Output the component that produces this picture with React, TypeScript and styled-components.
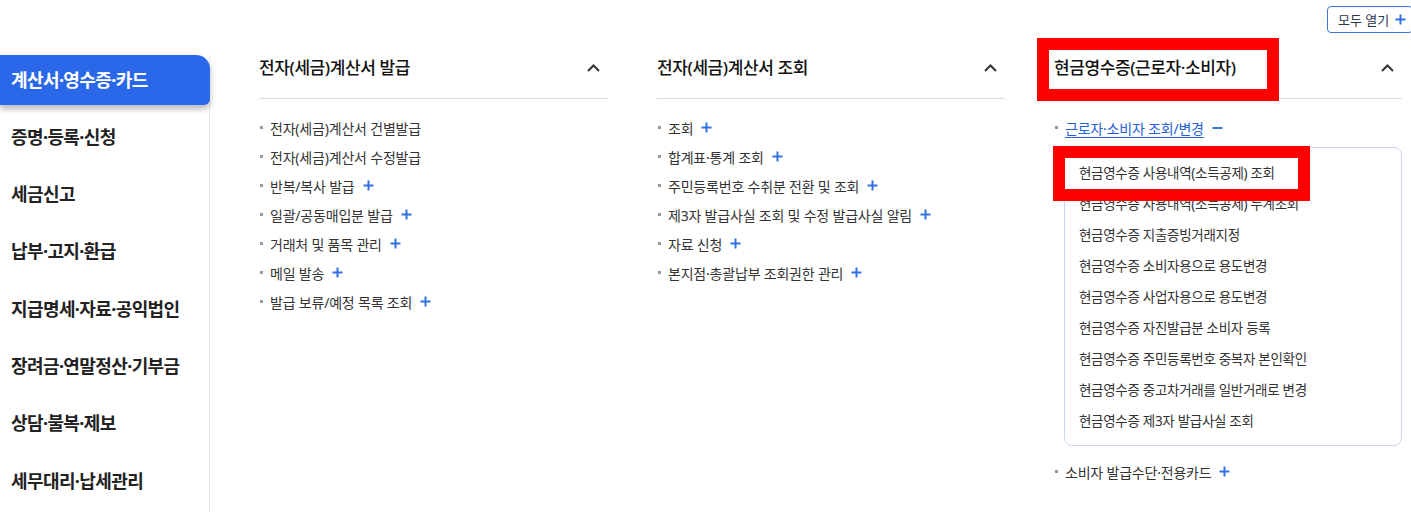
import * as React from 'react';
import styled, { createGlobalStyle } from 'styled-components';

const GlobalStyle = createGlobalStyle`
    body {
        margin: 0;
        background: #fff;
        font-family: 'Noto Sans', 'Noto Sans CJK KR', sans-serif;
        color: #222;
    }
`;

type Item = { label: string; more?: boolean };

const SIDE_MENU = [
    '계산서·영수증·카드',
    '증명·등록·신청',
    '세금신고',
    '납부·고지·환급',
    '지급명세·자료·공익법인',
    '장려금·연말정산·기부금',
    '상담·불복·제보',
    '세무대리·납세관리',
];

const ISSUE: Item[] = [
    { label: '전자(세금)계산서 건별발급' },
    { label: '전자(세금)계산서 수정발급' },
    { label: '반복/복사 발급', more: true },
    { label: '일괄/공동매입분 발급', more: true },
    { label: '거래처 및 품목 관리', more: true },
    { label: '메일 발송', more: true },
    { label: '발급 보류/예정 목록 조회', more: true },
];

const LOOKUP: Item[] = [
    { label: '조회', more: true },
    { label: '합계표·통계 조회', more: true },
    { label: '주민등록번호 수취분 전환 및 조회', more: true },
    { label: '제3자 발급사실 조회 및 수정 발급사실 알림', more: true },
    { label: '자료 신청', more: true },
    { label: '본지점·총괄납부 조회권한 관리', more: true },
];

const CASH_SUB = [
    '현금영수증 사용내역(소득공제) 조회',
    '현금영수증 사용내역(소득공제) 누계조회',
    '현금영수증 지출증빙거래지정',
    '현금영수증 소비자용으로 용도변경',
    '현금영수증 사업자용으로 용도변경',
    '현금영수증 자진발급분 소비자 등록',
    '현금영수증 주민등록번호 중복자 본인확인',
    '현금영수증 중고차거래를 일반거래로 변경',
    '현금영수증 제3자 발급사실 조회',
];

const PlusIcon = () => (
    <IconSvg width="11" height="11" viewBox="0 0 11 11">
        <path d="M5.5 0.5v10M0.5 5.5h10" stroke="#3570e0" strokeWidth="2" fill="none" />
    </IconSvg>
);

const MinusIcon = () => (
    <IconSvg width="11" height="11" viewBox="0 0 11 11">
        <path d="M0.5 6h10" stroke="#3570e0" strokeWidth="2" fill="none" />
    </IconSvg>
);

const ChevronUp = () => (
    <svg width="13" height="8" viewBox="0 0 13 8">
        <path d="M1 7l5.5-5.5L12 7" stroke="#333" strokeWidth="2" fill="none" />
    </svg>
);

const MenuColumn = ({ title, items }: { title: string; items: Item[] }) => (
    <Column>
        <ColumnHeader>
            <ColumnTitle>{title}</ColumnTitle>
            <ChevronUp />
        </ColumnHeader>
        <List>
            {items.map((item) => (
                <ListItem key={item.label}>
                    {item.label}
                    {item.more && <PlusIcon />}
                </ListItem>
            ))}
        </List>
    </Column>
);

const App = () => {
    return (
        <Page>
            <GlobalStyle />
            <TopBar>
                <OpenAllButton>
                    모두 열기 <PlusIcon />
                </OpenAllButton>
            </TopBar>
            <Main>
                <Sidebar>
                    {SIDE_MENU.map((label, i) => (
                        <SideItem key={label} $active={i === 0}>
                            {label}
                        </SideItem>
                    ))}
                </Sidebar>
                <Columns>
                    <MenuColumn title="전자(세금)계산서 발급" items={ISSUE} />
                    <MenuColumn title="전자(세금)계산서 조회" items={LOOKUP} />
                    <Column>
                        <ColumnHeader>
                            <ColumnTitle>현금영수증(근로자·소비자)</ColumnTitle>
                            <ChevronUp />
                        </ColumnHeader>
                        <List>
                            <ListItem>
                                <ActiveLink>근로자·소비자 조회/변경</ActiveLink>
                                <MinusIcon />
                            </ListItem>
                            <SubBox>
                                {CASH_SUB.map((label) => (
                                    <SubItem key={label}>{label}</SubItem>
                                ))}
                            </SubBox>
                            <ListItem>
                                소비자 발급수단·전용카드
                                <PlusIcon />
                            </ListItem>
                        </List>
                    </Column>
                </Columns>
            </Main>
            <Highlight style={{ left: 1037, top: 38, width: 242, height: 63 }} />
            <Highlight style={{ left: 1053, top: 146, width: 257, height: 55 }} />
        </Page>
    );
};

const Page = styled.div`
    position: relative;
    width: 1411px;
    height: 512px;
    overflow: hidden;
`;

const TopBar = styled.div`
    height: 55px;
    display: flex;
    justify-content: flex-end;
    align-items: flex-start;
    padding-top: 6px;
    box-sizing: border-box;
`;

const OpenAllButton = styled.button`
    display: flex;
    align-items: center;
    gap: 4px;
    height: 27px;
    width: 86px;
    margin-right: -2px;
    padding: 0 0 0 10px;
    border: 1px solid #3f72db;
    border-radius: 4px;
    background: #fff;
    font-family: inherit;
    font-size: 13px;
    color: #2c3550;
    box-sizing: border-box;
`;

const Main = styled.div`
    display: flex;
    height: 457px;
`;

const Sidebar = styled.nav`
    width: 210px;
    flex-shrink: 0;
    border-right: 1px solid #e4e4f4;
    box-sizing: border-box;
    display: flex;
    flex-direction: column;
    gap: 7.3px;
`;

const SideItem = styled.div<{ $active?: boolean }>`
    height: 50px;
    margin-right: -1px;
    display: flex;
    align-items: center;
    padding: 0 0 3px 11px;
    box-sizing: border-box;
    font-size: 18px;
    font-weight: 700;
    letter-spacing: -0.6px;
    color: ${({ $active }) => ($active ? '#fff' : '#222')};
    background: ${({ $active }) => ($active ? '#2a68e9' : 'transparent')};
    border-radius: 0 14px 6px 0;
    box-shadow: ${({ $active }) => ($active ? '0 4px 6px rgba(0, 0, 0, 0.28)' : 'none')};
    position: relative;
    z-index: 1;
`;

const Columns = styled.div`
    flex: 1;
    display: grid;
    grid-template-columns: 349px 348px 348px;
    column-gap: 49px;
    padding-left: 49px;
`;

const Column = styled.section`
    display: flex;
    flex-direction: column;
`;

const ColumnHeader = styled.div`
    height: 43px;
    border-bottom: 1px solid #dcdcdc;
    display: flex;
    justify-content: space-between;
    align-items: flex-start;
    padding-right: 8px;
    box-sizing: content-box;
    & > svg {
        margin-top: 9px;
    }
`;

const ColumnTitle = styled.h3`
    margin: 0;
    font-size: 17px;
    font-weight: 500;
    line-height: 26px;
    color: #111;
    letter-spacing: -0.4px;
`;

const List = styled.ul`
    list-style: none;
    margin: 0;
    padding: 14px 0 0;
`;

const ListItem = styled.li`
    position: relative;
    height: 29px;
    display: flex;
    align-items: center;
    gap: 6px;
    padding-left: 11px;
    font-size: 14px;
    color: #333;
    letter-spacing: -0.2px;
    &::before {
        content: '';
        position: absolute;
        left: 1px;
        top: 13px;
        width: 3px;
        height: 3px;
        background: #999;
    }
`;

const IconSvg = styled.svg`
    flex-shrink: 0;
    margin-left: 2px;
`;

const ActiveLink = styled.a`
    color: #2462d6;
    text-decoration: underline;
    text-underline-offset: 3px;
    cursor: pointer;
`;

const SubBox = styled.ul`
    list-style: none;
    margin: 5px 0 11px 10px;
    padding: 8px 0 10px 14px;
    border: 1px solid #c8d6ef;
    border-radius: 8px;
`;

const SubItem = styled.li`
    height: 31px;
    display: flex;
    align-items: center;
    font-size: 13.5px;
    color: #333;
    letter-spacing: -0.3px;
`;

const Highlight = styled.div`
    position: absolute;
    border: 12px solid #ff0000;
    box-sizing: border-box;
    pointer-events: none;
    z-index: 5;
`;

export default App;
